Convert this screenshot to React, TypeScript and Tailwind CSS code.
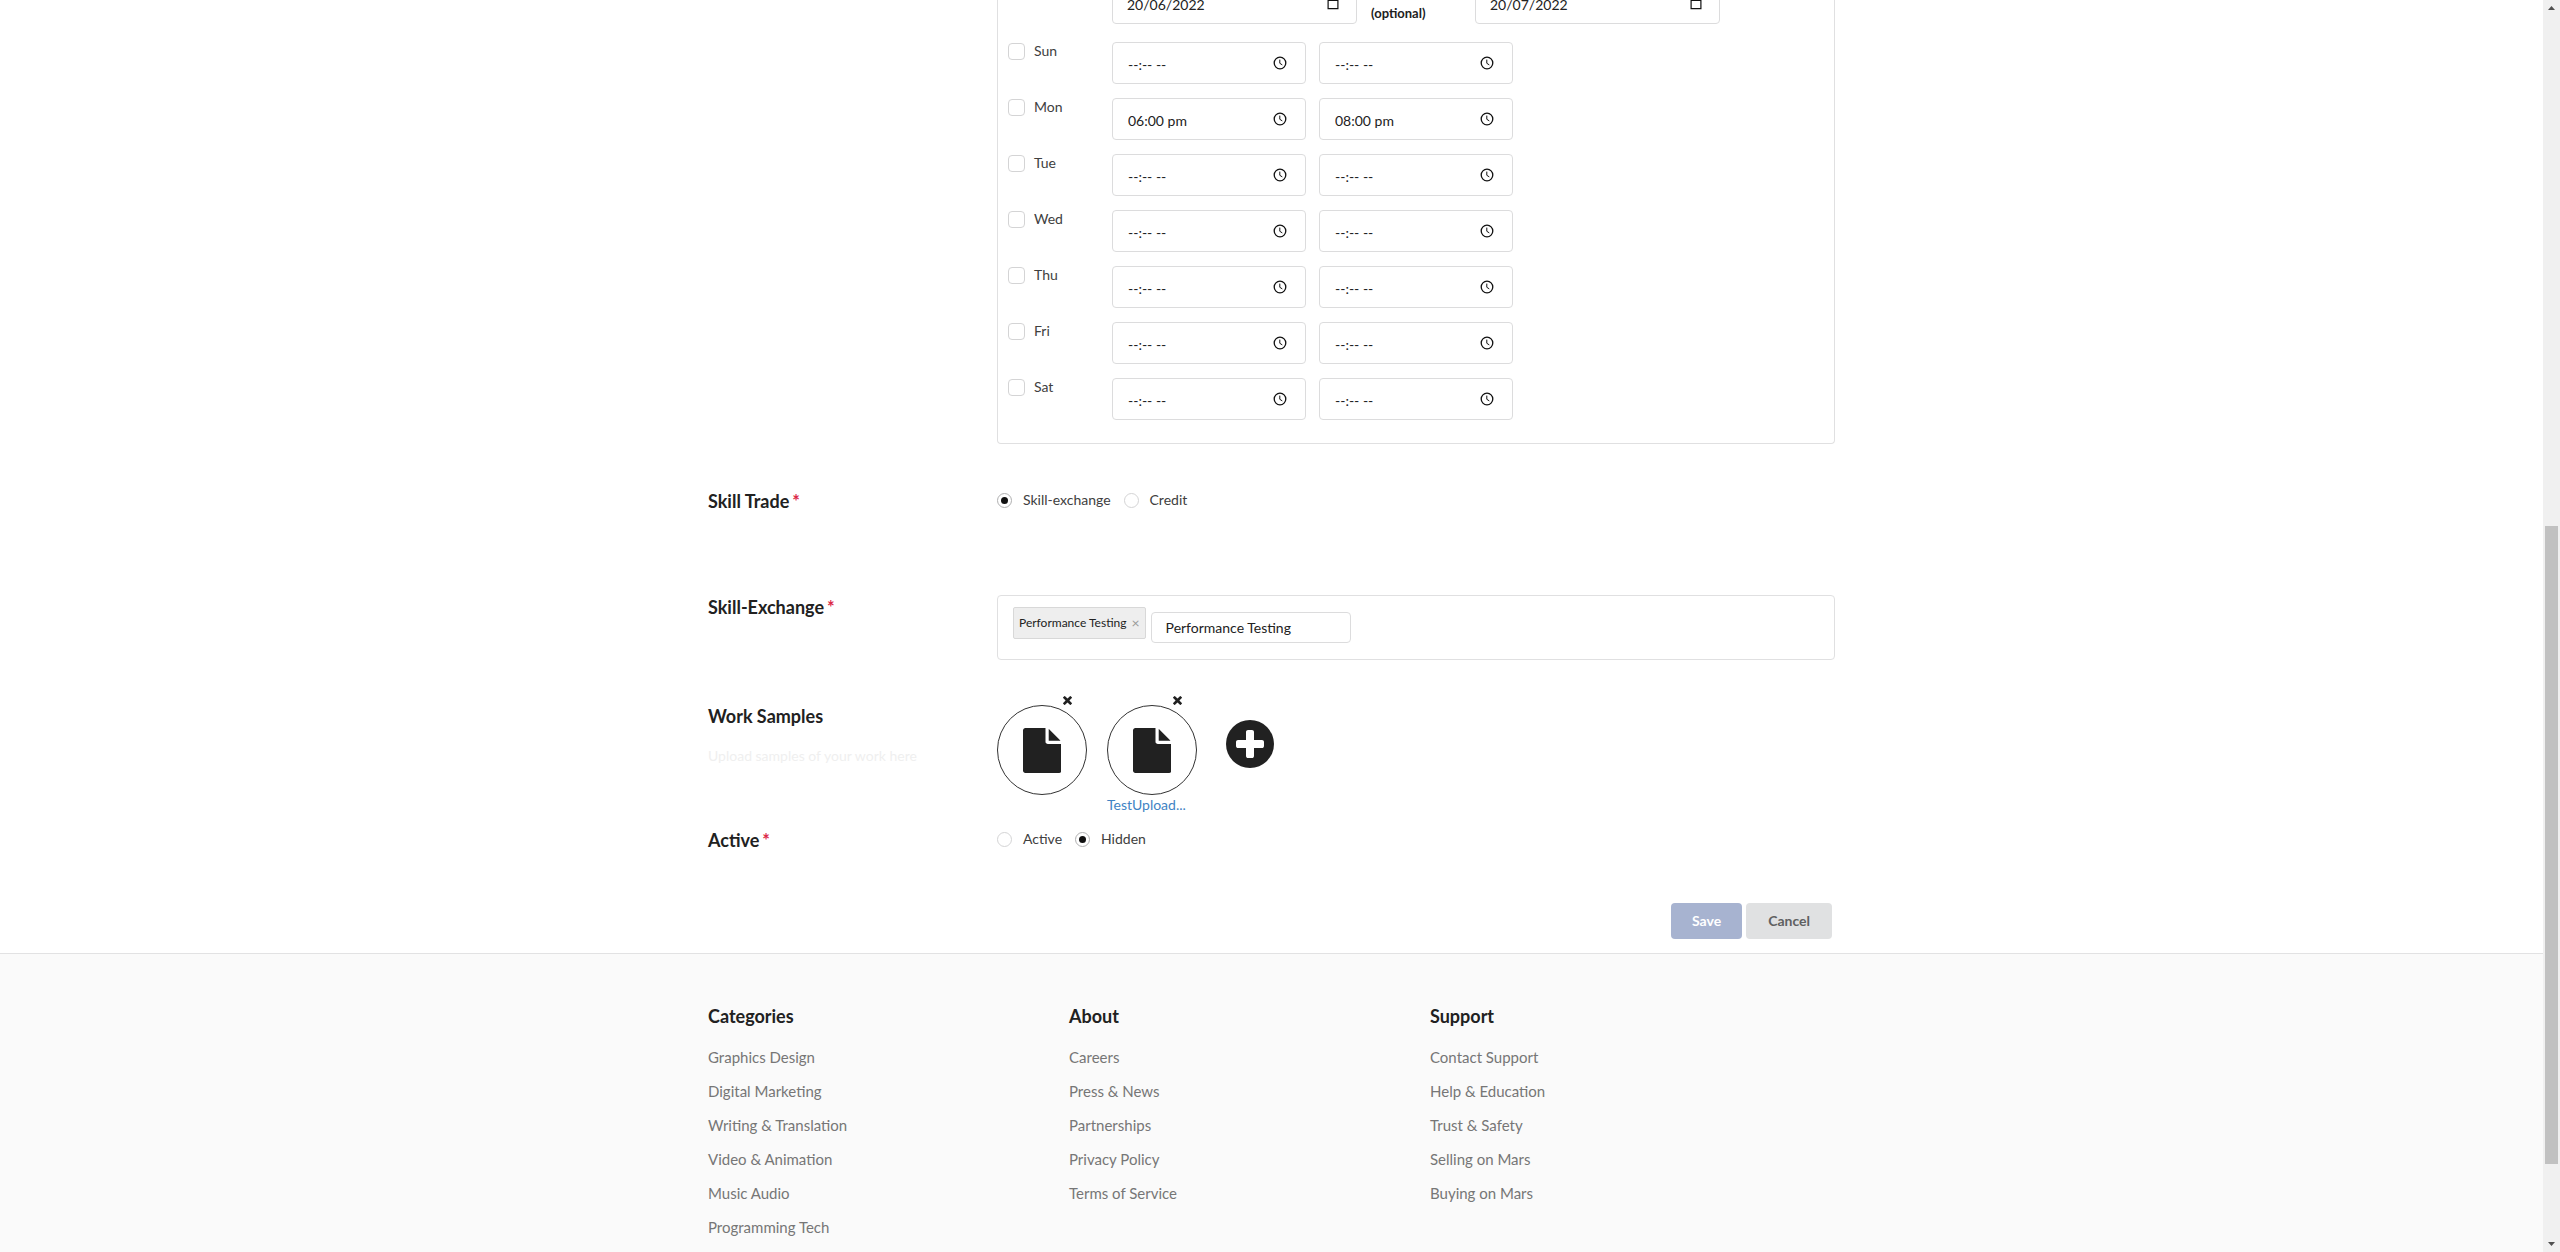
import React, { useState } from "react";

const DAYS = [
  { name: "Sun", start: "", end: "" },
  { name: "Mon", start: "06:00 pm", end: "08:00 pm" },
  { name: "Tue", start: "", end: "" },
  { name: "Wed", start: "", end: "" },
  { name: "Thu", start: "", end: "" },
  { name: "Fri", start: "", end: "" },
  { name: "Sat", start: "", end: "" },
];

const FOOTER = [
  {
    title: "Categories",
    links: [
      "Graphics Design",
      "Digital Marketing",
      "Writing & Translation",
      "Video & Animation",
      "Music Audio",
      "Programming Tech",
    ],
  },
  {
    title: "About",
    links: ["Careers", "Press & News", "Partnerships", "Privacy Policy", "Terms of Service"],
  },
  {
    title: "Support",
    links: ["Contact Support", "Help & Education", "Trust & Safety", "Selling on Mars", "Buying on Mars"],
  },
];

function ClockIcon() {
  return (
    <svg viewBox="0 0 14 14" className="size-3.5" fill="none" stroke="#111" strokeWidth="1.3">
      <circle cx="7" cy="7" r="5.8" />
      <path d="M6.8 3.6v3.7l2.5 1.6" strokeWidth="1" />
    </svg>
  );
}

function CalendarIcon() {
  return (
    <svg viewBox="0 0 14 14" className="size-3.5">
      <path fill="#111" d="M3 .5h1.5V2h5V.5H11V2h1.5v11.2h-11V2H3zM2.7 5v7h8.6V5z" fillRule="evenodd" />
    </svg>
  );
}

function FileIcon() {
  return (
    <svg viewBox="0 0 1536 1792" className="h-[45px]" fill="#212121">
      <path d="M1024 512v-472q22 14 36 28l408 408q14 14 28 36h-472zm-128 32q0 40 28 68t68 28h544v1056q0 40-28 68t-68 28h-1344q-40 0-68-28t-28-68v-1600q0-40 28-68t68-28h800v544z" />
    </svg>
  );
}

function TimesIcon() {
  return (
    <svg viewBox="206 326 1092 1092" className="size-[9px]" fill="#212121">
      <path d="M1298 1214q0 28-20 48l-136 136q-20 20-48 20t-48-20l-294-294-294 294q-20 20-48 20t-48-20l-136-136q-20-20-20-48t20-48l294-294-294-294q-20-20-20-48t20-48l136-136q20-20 48-20t48 20l294 294 294-294q20-20 48-20t48 20l136 136q20 20 20 48t-20 48l-294 294 294 294q20 20 20 48z" />
    </svg>
  );
}

function PlusCircleIcon() {
  return (
    <svg viewBox="0 0 1536 1536" className="size-12">
      <circle cx="768" cy="768" r="768" fill="#212121" />
      <path
        fill="#fff"
        d="M1216 832v-128q0-26-19-45t-45-19h-256v-256q0-26-19-45t-45-19h-128q-26 0-45 19t-19 45v256h-256q-26 0-45 19t-19 45v128q0 26 19 45t45 19h256v256q0 26 19 45t45 19h128q26 0 45-19t19-45v-256h256q26 0 45-19t19-45z"
      />
    </svg>
  );
}

type PickerProps = { label: string; value: string; placeholder: string; kind: "date" | "time" };

function PickerField({ label, value, placeholder, kind }: PickerProps) {
  return (
    <div
      className={
        kind === "date"
          ? "flex h-[42px] w-[245px] shrink-0 items-center rounded-sm border border-[#dcdcdd] bg-white pr-4 pl-3.5"
          : "flex h-[42px] w-[194px] shrink-0 items-center rounded-sm border border-[#dcdcdd] bg-white pr-[18px] pl-[15px]"
      }
    >
      <input
        type="text"
        aria-label={label}
        defaultValue={value}
        placeholder={placeholder}
        className="min-w-0 flex-1 bg-transparent pt-[3px] text-sm text-[#222] outline-none placeholder:text-[#222]"
      />
      <button type="button" aria-label={`Open ${label} picker`}>
        {kind === "date" ? <CalendarIcon /> : <ClockIcon />}
      </button>
    </div>
  );
}

type RadioGroupProps = { name: string; options: string[]; initial: string };

function RadioGroup({ name, options, initial }: RadioGroupProps) {
  return (
    <div role="radiogroup" aria-label={name} className="flex h-[22px] items-center gap-[13px]">
      {options.map((o) => (
        <label key={o} className="flex items-center gap-[11px] text-sm text-[#404040]">
          <input
            type="radio"
            name={name}
            defaultChecked={o === initial}
            className="flex size-[15px] shrink-0 appearance-none items-center justify-center rounded-full border border-[#d4d4d5] bg-white checked:border-[#b0b0b1] checked:before:size-[7px] checked:before:rounded-full checked:before:bg-[#111] checked:before:content-['']"
          />
          {o}
        </label>
      ))}
    </div>
  );
}

function Heading({ children, required }: { children: React.ReactNode; required?: boolean }) {
  return (
    <h3 className="text-lg leading-6 font-bold text-[#212121]">
      {children}
      {required && <span className="ml-[3px] text-[#db2848]">*</span>}
    </h3>
  );
}

function Section({ label, className, children }: { label?: React.ReactNode; className: string; children: React.ReactNode }) {
  return (
    <section className={className}>
      <div>{label}</div>
      <div className="min-w-0">{children}</div>
    </section>
  );
}

function Sample({ link }: { link?: string }) {
  return (
    <div className="w-[90px]">
      <div className="flex h-[9px] justify-end pr-[15px]">
        <button type="button" aria-label="Remove sample">
          <TimesIcon />
        </button>
      </div>
      <div className="flex size-[90px] items-center justify-center rounded-full border border-[#333]">
        <FileIcon />
      </div>
      {link && (
        <a href="#sample" className="block h-5 text-sm leading-5 text-[#4183c4]">
          {link}
        </a>
      )}
    </div>
  );
}

export default function App() {
  const [tags, setTags] = useState(["Performance Testing"]);

  return (
    <div className="flex h-screen overflow-hidden bg-white font-['Lato',sans-serif] text-sm text-[#212121]">
      <main className="flex min-w-0 flex-1 flex-col">
        <form className="mx-auto w-full max-w-[1127px]" onSubmit={(e) => e.preventDefault()}>
          <Section className="grid grid-cols-[275px_1fr] gap-3.5">
            <div className="rounded-b-sm border border-t-0 border-[#e0e0e1] pb-[23px] pl-2.5">
              <div className="flex h-6 items-end gap-3.5 overflow-hidden pl-[104px]">
                <PickerField label="Start date" kind="date" value="20/06/2022" placeholder="dd/mm/yyyy" />
                <span className="w-[90px] pb-[3px] text-[13px] leading-4 font-bold">(optional)</span>
                <PickerField label="End date" kind="date" value="20/07/2022" placeholder="dd/mm/yyyy" />
              </div>
              <div className="mt-[18px] flex flex-col gap-3.5">
                {DAYS.map((d) => (
                  <div key={d.name} className="flex">
                    <label className="flex w-[104px] items-center gap-[9px] self-start text-sm leading-[18px] text-[#404040]">
                      <input
                        type="checkbox"
                        className="size-[17px] appearance-none rounded-sm border border-[#d4d4d5] bg-white checked:bg-[#404040]"
                      />
                      {d.name}
                    </label>
                    <div className="flex gap-[13px]">
                      <PickerField label={`${d.name} start`} kind="time" value={d.start} placeholder="--:-- --" />
                      <PickerField label={`${d.name} end`} kind="time" value={d.end} placeholder="--:-- --" />
                    </div>
                  </div>
                ))}
              </div>
            </div>
          </Section>

          <Section className="mt-[45px] grid grid-cols-[275px_1fr] gap-3.5" label={<Heading required>Skill Trade</Heading>}>
            <RadioGroup name="Skill Trade" options={["Skill-exchange", "Credit"]} initial="Skill-exchange" />
          </Section>

          <Section className="mt-[82px] grid grid-cols-[275px_1fr] gap-3.5" label={<Heading required>Skill-Exchange</Heading>}>
            <div className="flex h-[65px] items-start gap-[5px] rounded-sm border border-[#e0e0e1] pt-[11px] pl-[15px]">
              {tags.map((t) => (
                <span
                  key={t}
                  className="flex h-8 items-center gap-[5px] rounded-xs border border-[#d8d8d8] bg-[#eeeeee] px-[5px] text-xs text-[#222]"
                >
                  {t}
                  <button
                    type="button"
                    aria-label={`Remove ${t}`}
                    className="text-sm text-[#999]"
                    onClick={() => setTags(tags.filter((x) => x !== t))}
                  >
                    ×
                  </button>
                </span>
              ))}
              <input
                type="text"
                aria-label="Add new tag"
                defaultValue="Performance Testing"
                className="mt-[5px] h-[31px] w-[200px] rounded-sm border border-[#dcdcdd] px-3.5 text-sm text-[#222] outline-none"
              />
            </div>
          </Section>

          <Section
            className="mt-9 grid grid-cols-[275px_1fr] gap-3.5"
            label={
              <div className="pt-2">
                <Heading>Work Samples</Heading>
                <p className="mt-[18px] text-sm leading-5 text-[#efefef]">Upload samples of your work here</p>
              </div>
            }
          >
            <div className="flex items-start gap-5">
              <Sample />
              <Sample link="TestUpload..." />
              <button type="button" aria-label="Add work sample" className="mt-6 ml-[9px]">
                <PlusCircleIcon />
              </button>
            </div>
          </Section>

          <Section className="mt-[13px] grid grid-cols-[275px_1fr] gap-3.5" label={<Heading required>Active</Heading>}>
            <RadioGroup name="Active" options={["Active", "Hidden"]} initial="Hidden" />
          </Section>

          <div className="mt-[51px] flex justify-end gap-1 pr-[3px]">
            <button type="submit" className="h-9 rounded-sm bg-[#a7b3d0] px-[21px] text-sm font-bold text-white">
              Save
            </button>
            <button type="button" className="h-9 rounded-sm bg-[#e0e1e2] px-[22px] text-sm font-bold text-[#5f6061]">
              Cancel
            </button>
          </div>
        </form>

        <footer className="mt-3.5 flex-1 border-t border-[#e2e2e3] bg-[#fafafa] pt-[50px]">
          <div className="mx-auto flex w-full max-w-[1127px]">
            {FOOTER.map((c) => (
              <nav key={c.title} aria-label={c.title} className="w-[361px]">
                <h4 className="text-lg leading-6 font-bold">{c.title}</h4>
                <ul className="mt-3">
                  {c.links.map((l) => (
                    <li key={l} className="text-[15px] leading-[34px]">
                      <a href="#footer" className="text-[#767676]">
                        {l}
                      </a>
                    </li>
                  ))}
                </ul>
              </nav>
            ))}
          </div>
        </footer>
      </main>

      <div aria-hidden="true" className="flex w-[17px] shrink-0 flex-col items-center justify-between bg-[#f0f0f0] py-1.5">
        <svg viewBox="0 0 7 4" className="h-1 w-[7px]" fill="#505050">
          <path d="M0 4 3.5 0 7 4z" />
        </svg>
        <div className="flex w-[13px] flex-1 flex-col">
          <div className="grow-[515]" />
          <div className="grow-[637] bg-[#c1c1c1]" />
          <div className="grow-[78]" />
        </div>
        <svg viewBox="0 0 7 4" className="h-1 w-[7px]" fill="#505050">
          <path d="M0 0 3.5 4 7 0z" />
        </svg>
      </div>
    </div>
  );
}
